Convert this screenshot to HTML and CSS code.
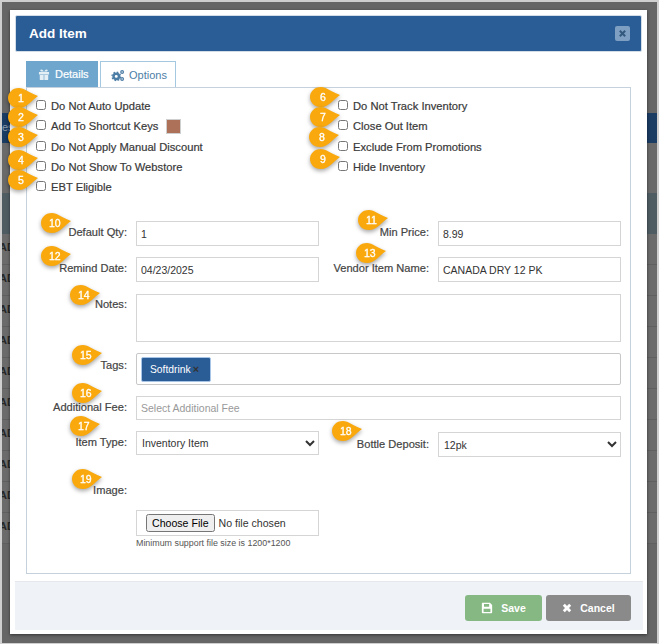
FILE: index.html
```html
<!DOCTYPE html>
<html lang="en">
<head>
<meta charset="utf-8">
<title>Add Item</title>
<link rel="stylesheet" href="styles.css">
</head>
<body>
<div class="page">
  <div class="backdrop">
    <div class="bd-top"></div>
    <div class="bd-bar"><span>es</span></div>
    <div class="bd-filter"></div>
    <div class="bd-row"><span>AD</span></div>
    <div class="bd-row"><span>AD</span></div>
    <div class="bd-row"><span>AD</span></div>
    <div class="bd-row"><span>AD</span></div>
    <div class="bd-row"><span>AD</span></div>
    <div class="bd-row"><span>AD</span></div>
    <div class="bd-row"><span>AD</span></div>
    <div class="bd-row"><span>AD</span></div>
    <div class="bd-row"><span>AD</span></div>
    <div class="bd-row"><span>AD</span></div>
  </div>

  <div class="modal">
    <header class="modal-head">
      <h1>Add Item</h1>
      <button class="close" type="button" aria-label="Close">
        <svg viewBox="0 0 10 10" width="9" height="9"><path d="M1.2 2.8 2.8 1.2 5 3.4 7.2 1.2 8.8 2.8 6.6 5 8.8 7.2 7.2 8.8 5 6.6 2.8 8.8 1.2 7.2 3.4 5Z"/></svg>
      </button>
    </header>

    <div class="modal-body">
      <nav class="tabs">
        <a class="tab tab-details">
          <svg viewBox="0 0 14 13" width="12" height="11"><path d="M1 3.5h12v3H1zM2 7.2h4.6V13H3a1 1 0 0 1-1-1zM7.4 7.2H12V12a1 1 0 0 1-1 1H7.4zM6 3 3.6 2.900C2 2.600 2.400.3 4 .5 5.300.7 6.300 2 7 3 7.700 2 8.700.7 10 .5c1.600-.2 2 2.100.4 2.400L8 3Z"/></svg>
          Details
        </a>
        <a class="tab tab-options">
          <svg viewBox="0 0 16 14" width="14" height="13"><circle cx="6" cy="8" r="3.100" fill="none" stroke-width="2.800"/><circle cx="6" cy="8" r="4.900" fill="none" stroke-width="1.400" stroke-dasharray="1.900 1.950"/><circle cx="12.700" cy="3" r="1.500" fill="none" stroke-width="1.500"/><circle cx="12.700" cy="11" r="1.500" fill="none" stroke-width="1.500"/></svg>
          Options
        </a>
      </nav>

      <section class="panel">
        <div class="checks">
          <div class="check-col">
            <label class="check"><input type="checkbox"><span>Do Not Auto Update</span></label>
            <label class="check"><input type="checkbox"><span>Add To Shortcut Keys</span><i class="swatch"></i></label>
            <label class="check"><input type="checkbox"><span>Do Not Apply Manual Discount</span></label>
            <label class="check"><input type="checkbox"><span>Do Not Show To Webstore</span></label>
            <label class="check"><input type="checkbox"><span>EBT Eligible</span></label>
          </div>
          <div class="check-col">
            <label class="check"><input type="checkbox"><span>Do Not Track Inventory</span></label>
            <label class="check"><input type="checkbox"><span>Close Out Item</span></label>
            <label class="check"><input type="checkbox"><span>Exclude From Promotions</span></label>
            <label class="check"><input type="checkbox"><span>Hide Inventory</span></label>
          </div>
        </div>

        <div class="form">
          <div class="row two r-qty">
            <label class="lbl">Default Qty:</label><input class="field" type="text" value="1">
            <label class="lbl">Min Price:</label><input class="field" type="text" value="8.99">
          </div>
          <div class="row two r-date">
            <label class="lbl">Remind Date:</label><input class="field" type="text" value="04/23/2025">
            <label class="lbl">Vendor Item Name:</label><input class="field" type="text" value="CANADA DRY 12 PK">
          </div>
          <div class="row one r-notes">
            <label class="lbl lbl-top">Notes:</label><textarea class="field area"></textarea>
          </div>
          <div class="row one r-tags">
            <label class="lbl">Tags:</label>
            <div class="field tags"><span class="tag">Softdrink<b class="tag-x">×</b></span></div>
          </div>
          <div class="row one r-fee">
            <label class="lbl">Additional Fee:</label><input class="field" type="text" placeholder="Select Additional Fee">
          </div>
          <div class="row two r-type">
            <label class="lbl">Item Type:</label>
            <select class="field"><option>Inventory Item</option></select>
            <label class="lbl lbl-deposit">Bottle Deposit:</label>
            <select class="field sel-deposit"><option>12pk</option></select>
          </div>
          <div class="row one r-image">
            <label class="lbl">Image:</label>
          </div>
          <div class="row one r-file">
            <span></span>
            <div class="file-wrap">
              <div class="field file"><input type="file"></div>
              <small class="hint">Minimum support file size is 1200*1200</small>
            </div>
          </div>
        </div>
      </section>
    </div>

    <footer class="modal-foot">
      <button class="btn btn-save" type="button">
        <svg viewBox="0 0 14 14" width="12" height="12"><path fill-rule="evenodd" d="M1.500 1H10.500L13 3.500V12a1 1 0 0 1-1 1H2a1 1 0 0 1-1-1V1.500ZM3.500 2.200V5.500H9.500V2.200ZM3 8V11.800H11V8Z"/></svg>
        Save
      </button>
      <button class="btn btn-cancel" type="button">
        <svg viewBox="0 0 10 10" width="10" height="10"><path d="M.8 2.800 2.800.8 5 3 7.200.8 9.200 2.800 7 5 9.200 7.200 7.200 9.200 5 7 2.800 9.200.8 7.200 3 5Z"/></svg>
        Cancel
      </button>
    </footer>
  </div>

  <span class="pin p1">1</span><span class="pin p2">2</span><span class="pin p3">3</span><span class="pin p4">4</span><span class="pin p5">5</span>
  <span class="pin p6">6</span><span class="pin p7">7</span><span class="pin p8">8</span><span class="pin p9">9</span>
  <span class="pin p10">10</span><span class="pin p11">11</span><span class="pin p12">12</span><span class="pin p13">13</span>
  <span class="pin p14">14</span><span class="pin p15">15</span><span class="pin p16">16</span><span class="pin p17">17</span>
  <span class="pin p18">18</span><span class="pin p19">19</span>
</div>
</body>
</html>
```
FILE: styles.css
```css
* { box-sizing: border-box; }
html { background: #cfcfcf; }
body { margin: 0; font-family: "Liberation Sans", Arial, sans-serif; font-size: 11px; color: #393939; }

.page {
  position: relative;
  margin: 2px;
  width: 655px;
  height: 641px;
  padding: 8px 10px 0 8px;
  background: #666;
  overflow: hidden;
}

/* dimmed page behind the dialog */
.backdrop { position: absolute; inset: 0; display: flex; flex-direction: column; }
.bd-top { height: 111px; flex: none; background: #666; }
.bd-bar { height: 30px; flex: none; background: #1b3c63; color: #8a99a8; padding: 8px 0 0 0; }
.bd-filter { height: 91px; flex: none; background: linear-gradient(#6a6a6a 0 50px, #4f5d63 50px 91px); }
.bd-row {
  height: 31px;
  flex: none;
  background: #6b6b6b;
  border-bottom: 1px solid #5f5f5f;
  color: #262626;
  font-weight: bold;
  font-size: 11px;
  padding-top: 7px;
  text-indent: -3px;
}

/* dialog */
.modal {
  position: relative;
  width: 637px;
  height: 624px;
  padding: 5px;
  background: #fff;
  box-shadow: 0 1px 3px rgba(0, 0, 0, .5);
  display: flex;
  flex-direction: column;
}
.modal-head {
  flex: none;
  height: 37px;
  padding: 0 11px 0 13px;
  background: #2a5c96;
  border: 1px solid #d3dde8;
  border-radius: 2px;
  display: flex;
  align-items: center;
  justify-content: space-between;
}
.modal-head h1 { margin: 0 0 1px; font-size: 13.500px; font-weight: bold; color: #fff; }
.close {
  width: 15px;
  height: 15px;
  padding: 0;
  border: 0;
  border-radius: 2px;
  background: #7f9fc2;
  display: flex;
  align-items: center;
  justify-content: center;
}
.close svg { fill: #34597f; }

.modal-body { flex: 1; padding: 9px 11px 0 11px; }
.tabs { display: flex; gap: 2px; height: 26px; }
.tab { display: flex; align-items: center; height: 26px; gap: 5px; }
.tab-details { width: 72px; padding-left: 12px; background: #6ea6cd; color: #fff; -webkit-text-stroke: .2px #fff; }
.tab-details svg { fill: #e4eef5; }
.tab-options {
  width: 76px;
  padding-left: 10px;
  gap: 4px;
  position: relative;
  height: 27px;
  background: #fff;
  color: #4d7ea6;
  border: 1px solid #a3c8e0;
  border-bottom: 0;
}
.tab-options svg { stroke: #4d7ea6; fill: none; }

.panel {
  position: relative;
  width: 605px;
  height: 487px;
  border: 1px solid #c5d2de;
  padding: 8px 0 0 9px;
}

.checks { display: flex; }
.check-col { display: flex; flex-direction: column; }
.check-col:first-child { width: 302px; }
.check {
  display: flex;
  align-items: center;
  height: 20.300px;
  font-size: 11.200px;
  -webkit-text-stroke: .2px #393939;
}
.check input { width: 10px; height: 10px; margin: 0 5px 2px 0; flex: none; }
.swatch {
  width: 15px;
  height: 15px;
  margin-left: 8px;
  background: #ad7059;
  border: 1px solid #cfcfcf;
}

.form { display: flex; flex-direction: column; margin-top: 24px; margin-left: -9px; }
.row { display: grid; align-items: center; }
.row.two { grid-template-columns: 100px 183px 101px 183px; column-gap: 9px; }
.row.one { grid-template-columns: 100px 485px; column-gap: 9px; }
.lbl {
  text-align: right;
  font-size: 11.100px;
  color: #444;
  -webkit-text-stroke: .2px #444;
}
.r-qty .lbl { padding-bottom: 4px; }
.r-date .lbl { padding-bottom: 3px; }
.r-tags .lbl { padding-bottom: 9px; }
.r-fee .lbl { padding-bottom: 2px; }
.lbl-top { align-self: start; padding-top: 4px; }
.field {
  display: block;
  width: 100%;
  height: 25px;
  margin: 0;
  padding: 0 4px;
  border: 1px solid #d5d5d5;
  border-radius: 0;
  background: #fff;
  font-family: "Liberation Sans", Arial, sans-serif;
  font-size: 10.500px;
  color: #333;
  outline: 0;
}
.field::placeholder { color: #999; opacity: 1; }
.r-qty { margin-bottom: 11px; }
.r-date { margin-bottom: 12px; }
.area { height: 48px; resize: none; }
.r-notes { margin-bottom: 11px; }
.tags {
  height: 32px;
  padding: 2px 4px;
  border: 1px solid #c8c8c8;
  border-radius: 2px;
  display: flex;
  align-items: center;
}
.tag {
  display: flex;
  align-items: center;
  width: 70px;
  height: 25px;
  padding-left: 8px;
  background: #2a5c96;
  border: 1px solid #a8c4e6;
  border-radius: 2px;
  color: #fff;
  font-size: 10.300px;
}
.tag-x { margin-left: 2px; color: #333; font-size: 11px; line-height: 1; }
.r-tags { margin-bottom: 11px; }
.r-fee { margin-bottom: 11px; }
.r-fee .field { height: 24px; }
.r-type { align-items: start; }
.r-type .lbl { padding-top: 5px; }
.r-type .lbl-deposit { padding-top: 7px; }
.r-type select { height: 24px; padding: 0 1px; }
.r-type .sel-deposit { margin-top: 1px; height: 25px; }
.r-image { height: 39px; align-items: end; }
.r-file { margin-top: 14px; align-items: start; }
.row.r-file { grid-template-columns: 100px 183px; }
.file { height: 26px; padding: 0 0 0 9px; display: flex; align-items: center; }
.file input { width: 170px; font-family: "Liberation Sans", Arial, sans-serif; font-size: 10.600px; color: #333; }
.file input::file-selector-button { margin-right: 4px; padding: 1px 4px; font-size: 10.600px; }
.hint { display: block; margin-top: 2px; font-size: 8.900px; white-space: nowrap; color: #555; }

.modal-foot {
  flex: none;
  height: 49px;
  width: 628px;
  margin-top: 7px;
  padding: 13px 12px 0 0;
  background: #eff3f8;
  border-top: 1px solid #e4e8ed;
  display: flex;
  justify-content: flex-end;
  gap: 4px;
}
.btn {
  height: 26px;
  border: 0;
  border-radius: 3px;
  color: #fff;
  font-family: "Liberation Sans", Arial, sans-serif;
  font-size: 10.500px;
  font-weight: bold;
  display: flex;
  align-items: center;
  justify-content: center;
  gap: 8px;
}
.btn svg { fill: #fff; }
.btn-save { width: 77px; background: #86b883; }
.btn-cancel { width: 85px; background: #8a8a8a; }

/* numbered callouts placed over the form */
.pin {
  position: absolute;
  width: 31px;
  height: 20px;
  color: #fff;
  font-size: 10.500px;
  line-height: 20px;
  -webkit-text-stroke: .3px #fff;
  filter: drop-shadow(0 2px 2px rgba(0, 0, 0, .35));
  z-index: 2;
}
.pin::before {
  content: "";
  position: absolute;
  inset: 0;
  z-index: -1;
  background: #f9a80d;
  clip-path: path("M11 0C16 0 22 5 30 8C24 12 19 20 11 20C4 20 0 15 0 10C0 5 4 0 11 0Z");
}
.p1, .p2, .p3, .p4, .p5, .p6, .p7, .p8, .p9 { text-indent: 10px; }
.p10, .p11, .p12, .p13, .p14, .p15, .p16, .p17, .p18, .p19 { text-indent: 8px; }
.p1 { left: 6px; top: 86px; }
.p2 { left: 6px; top: 105px; }
.p3 { left: 6px; top: 125px; }
.p4 { left: 6px; top: 148px; }
.p5 { left: 6px; top: 168px; }
.p6 { left: 308px; top: 85px; }
.p7 { left: 308px; top: 105px; }
.p8 { left: 307px; top: 125px; }
.p9 { left: 308px; top: 147px; }
.p10 { left: 39px; top: 211px; }
.p11 { left: 356px; top: 208px; }
.p12 { left: 39px; top: 244px; }
.p13 { left: 354px; top: 241px; }
.p14 { left: 68px; top: 283px; }
.p15 { left: 70px; top: 343px; }
.p16 { left: 70px; top: 381px; }
.p17 { left: 68px; top: 414px; }
.p18 { left: 330px; top: 419px; }
.p19 { left: 70px; top: 467px; }
```
